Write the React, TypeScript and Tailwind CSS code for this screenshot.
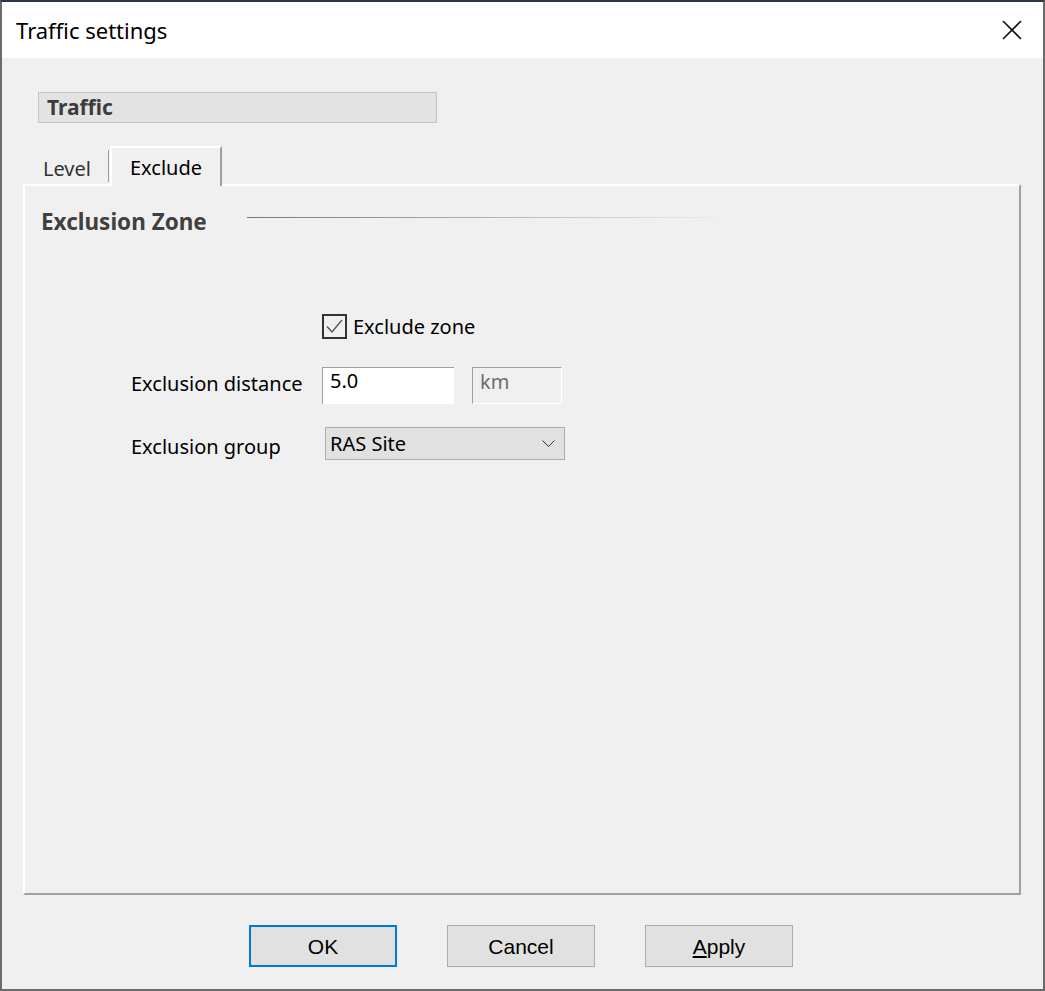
import React from "react";

const uiFont = { fontFamily: '"Noto Sans", "Open Sans", sans-serif' };
const btnFont = { fontFamily: '"Liberation Sans", Arial, sans-serif' };

const DialogButton: React.FC<{ label: React.ReactNode; primary?: boolean }> = ({
  label,
  primary,
}) => (
  <button
    className={`w-[148px] h-[42px] bg-[#e1e1e1] text-[21px] leading-none text-black flex items-center justify-center ${
      primary ? "border-2 border-[#0078d7]" : "border border-[#adadad]"
    }`}
    style={btnFont}
  >
    {label}
  </button>
);

export default function App() {
  return (
    <div
      className="w-[1045px] h-[991px] flex flex-col border-x-2 border-b-2 border-[#6b6b6b] border-t-2 border-t-[#2b3548] bg-[#f0f0f0] leading-none"
      style={uiFont}
    >
      {/* Title bar */}
      <div className="h-[56px] bg-white flex items-center justify-between pl-[14px] pr-[21px]">
        <span className="text-[22px] leading-none text-black">Traffic settings</span>
        <svg width="20" height="20" viewBox="0 0 20 20">
          <path d="M1 1 L19 19 M19 1 L1 19" stroke="#111" strokeWidth="1.6" fill="none" />
        </svg>
      </div>

      {/* Body */}
      <div className="flex-1 flex flex-col pl-[21px] pr-[22px]">
        <div className="mt-[34px] ml-[15px] w-[399px] h-[31px] bg-[#e3e3e3] border border-[#c3c3c3] flex items-center pl-[8px]">
          <span className="text-[21px] leading-none font-bold text-[#3c3c3c]">Traffic</span>
        </div>

        {/* Tabs */}
        <div className="mt-[23px] flex items-end h-[38px]">
          <div className="w-[85px] h-[34px] pl-[20px] pt-[9px] text-[20px] leading-none text-[#333]">
            Level
          </div>
          <div className="w-[1px] h-[32px] mb-[2px] bg-[#a0a0a0]" />
          <div className="relative z-10 ml-[1px] w-[112px] h-[40px] -mb-[2px] bg-[#f0f0f0] border-l-2 border-t-2 border-white border-r-2 border-r-[#a0a0a0] pl-[18px] pt-[10px] text-[20px] leading-none text-black">
            Exclude
          </div>
        </div>

        {/* Tab panel */}
        <div className="h-[711px] border-l-2 border-t-2 border-white border-r-2 border-b-2 border-r-[#a0a0a0] border-b-[#a0a0a0] flex flex-col pl-[16px]">
          <div className="mt-[25px] flex items-start">
            <div className="w-[206px] text-[22.5px] leading-none font-bold text-[#404040]">
              Exclusion Zone
            </div>
            <div className="mt-[6px] w-[486px] h-[1px] bg-gradient-to-r from-[#777777] to-transparent" />
          </div>

          <div className="mt-[80px] ml-[281px] flex items-center">
            <div className="w-[25px] h-[25px] border-2 border-[#333] flex items-center justify-center">
              <svg width="21" height="21" viewBox="0 0 21 21">
                <path d="M3 10.5 L8 16 L18 4" stroke="#555" strokeWidth="1.4" fill="none" />
              </svg>
            </div>
            <div className="ml-[6px] mt-[2px] text-[20px] leading-none text-black">Exclude zone</div>
          </div>

          <div className="mt-[28px] ml-[90px] flex items-start">
            <div className="w-[191px] pt-[7px] text-[20px] leading-none text-black">
              Exclusion distance
            </div>
            <div className="w-[132px] h-[37px] bg-white border-t border-l border-[#a0a0a0] pl-[7px] pt-[3px] text-[20px] leading-none text-black">
              5.0
            </div>
            <div className="ml-[18px] w-[90px] h-[37px] bg-[#f0f0f0] border border-white border-t-[#a0a0a0] border-l-[#a0a0a0] pl-[7px] pt-[4px] text-[20px] leading-none text-[#6d6d6d]">
              km
            </div>
          </div>

          <div className="mt-[23px] ml-[90px] flex items-start">
            <div className="w-[194px] pt-[10px] text-[20px] leading-none text-black">
              Exclusion group
            </div>
            <div className="w-[240px] h-[33px] bg-[#e1e1e1] border border-[#adadad] flex items-center justify-between pl-[4px] pr-[9px]">
              <div className="mt-[2px] text-[20px] leading-none text-black">RAS Site</div>
              <svg width="13" height="7" viewBox="0 0 13 7">
                <path d="M0.5 0.5 L6.5 6.5 L12.5 0.5" stroke="#333" strokeWidth="1" fill="none" />
              </svg>
            </div>
          </div>
        </div>

        {/* Buttons */}
        <div className="mt-[30px] pr-[2px] flex justify-center gap-[50px]">
          <DialogButton label="OK" primary />
          <DialogButton label="Cancel" />
          <DialogButton
            label={
              <span>
                <span className="underline">A</span>pply
              </span>
            }
          />
        </div>
      </div>
    </div>
  );
}
